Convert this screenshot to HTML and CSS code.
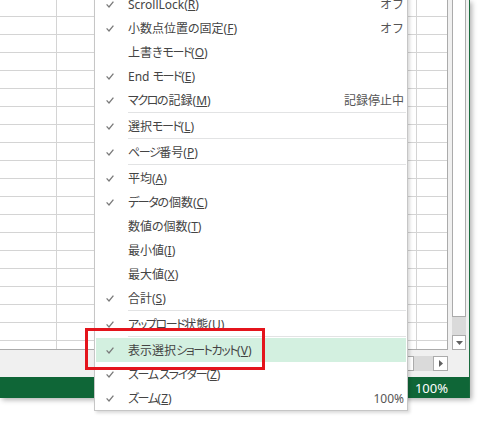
FILE: index.html
```html
<!DOCTYPE html>
<html lang="ja">
<head>
<meta charset="utf-8">
<link rel="stylesheet" href="styles.css">
</head>
<body>
<div class="window">
  <div class="sheet">
    <div class="grid"></div>
    <div class="vscroll">
      <div class="vthumb"></div>
      <div class="vtrack"></div>
      <div class="vbtn"><svg width="7" height="4" viewBox="0 0 7 4"><path d="M0 0H7L3.5 4Z" fill="#606060"/></svg></div>
    </div>
  </div>
  <div class="hbar">
    <div class="hscroll">
      <div class="hthumb"></div>
      <div class="htrack"></div>
      <div class="hbtn"><svg width="4" height="7" viewBox="0 0 4 7"><path d="M0 0V7L4 3.5Z" fill="#606060"/></svg></div>
    </div>
  </div>
  <div class="status"><span>100%</span></div>
</div>

<div class="menu">
  <div class="item"><span class="chk"><svg width="8" height="7" viewBox="0 0 8 7"><path d="M0.6 3.4L3 5.9L7.4 0.6" fill="none" stroke="#7a7a7a" stroke-width="1.3"/></svg></span><span class="label">ScrollLock(<u>R</u>)</span><span class="val">オフ</span></div>
  <div class="item"><span class="chk"><svg width="8" height="7" viewBox="0 0 8 7"><path d="M0.6 3.4L3 5.9L7.4 0.6" fill="none" stroke="#7a7a7a" stroke-width="1.3"/></svg></span><span class="label">小数点位置の固定(<u>F</u>)</span><span class="val">オフ</span></div>
  <div class="item"><span class="chk"></span><span class="label">上書き<span class="kana">モード</span>(<u>O</u>)</span></div>
  <div class="item"><span class="chk"><svg width="8" height="7" viewBox="0 0 8 7"><path d="M0.6 3.4L3 5.9L7.4 0.6" fill="none" stroke="#7a7a7a" stroke-width="1.3"/></svg></span><span class="label">End <span class="kana">モード</span>(<u>E</u>)</span></div>
  <div class="item"><span class="chk"><svg width="8" height="7" viewBox="0 0 8 7"><path d="M0.6 3.4L3 5.9L7.4 0.6" fill="none" stroke="#7a7a7a" stroke-width="1.3"/></svg></span><span class="label"><span class="kana">マクロ</span>の記録(<u>M</u>)</span><span class="val">記録停止中</span></div>
  <div class="sep"></div>
  <div class="item"><span class="chk"><svg width="8" height="7" viewBox="0 0 8 7"><path d="M0.6 3.4L3 5.9L7.4 0.6" fill="none" stroke="#7a7a7a" stroke-width="1.3"/></svg></span><span class="label">選択<span class="kana">モード</span>(<u>L</u>)</span></div>
  <div class="sep"></div>
  <div class="item"><span class="chk"><svg width="8" height="7" viewBox="0 0 8 7"><path d="M0.6 3.4L3 5.9L7.4 0.6" fill="none" stroke="#7a7a7a" stroke-width="1.3"/></svg></span><span class="label"><span class="kana">ページ</span>番号(<u>P</u>)</span></div>
  <div class="sep"></div>
  <div class="item"><span class="chk"><svg width="8" height="7" viewBox="0 0 8 7"><path d="M0.6 3.4L3 5.9L7.4 0.6" fill="none" stroke="#7a7a7a" stroke-width="1.3"/></svg></span><span class="label">平均(<u>A</u>)</span></div>
  <div class="item"><span class="chk"><svg width="8" height="7" viewBox="0 0 8 7"><path d="M0.6 3.4L3 5.9L7.4 0.6" fill="none" stroke="#7a7a7a" stroke-width="1.3"/></svg></span><span class="label"><span class="kana">データ</span>の個数(<u>C</u>)</span></div>
  <div class="item"><span class="chk"></span><span class="label">数値の個数(<u>T</u>)</span></div>
  <div class="item"><span class="chk"></span><span class="label">最小値(<u>I</u>)</span></div>
  <div class="item"><span class="chk"></span><span class="label">最大値(<u>X</u>)</span></div>
  <div class="item"><span class="chk"><svg width="8" height="7" viewBox="0 0 8 7"><path d="M0.6 3.4L3 5.9L7.4 0.6" fill="none" stroke="#7a7a7a" stroke-width="1.3"/></svg></span><span class="label">合計(<u>S</u>)</span></div>
  <div class="sep"></div>
  <div class="item"><span class="chk"><svg width="8" height="7" viewBox="0 0 8 7"><path d="M0.6 3.4L3 5.9L7.4 0.6" fill="none" stroke="#7a7a7a" stroke-width="1.3"/></svg></span><span class="label"><span class="kana">アップロード</span>状態(<u>U</u>)</span></div>
  <div class="sep"></div>
  <div class="item hl"><span class="chk"><svg width="8" height="7" viewBox="0 0 8 7"><path d="M0.6 3.4L3 5.9L7.4 0.6" fill="none" stroke="#7a7a7a" stroke-width="1.3"/></svg></span><span class="label">表示選択<span class="kana">ショートカット</span>(<u>V</u>)</span></div>
  <div class="item"><span class="chk"><svg width="8" height="7" viewBox="0 0 8 7"><path d="M0.6 3.4L3 5.9L7.4 0.6" fill="none" stroke="#7a7a7a" stroke-width="1.3"/></svg></span><span class="label"><span class="kana">ズーム スライダー</span>(<u>Z</u>)</span></div>
  <div class="item"><span class="chk"><svg width="8" height="7" viewBox="0 0 8 7"><path d="M0.6 3.4L3 5.9L7.4 0.6" fill="none" stroke="#7a7a7a" stroke-width="1.3"/></svg></span><span class="label"><span class="kana">ズーム</span>(<u>Z</u>)</span><span class="val">100%</span></div>
</div>

<div class="callout"></div>
</body>
</html>
```

FILE: styles.css
```css
html, body {
  margin: 0;
  padding: 0;
}
body {
  width: 485px;
  height: 430px;
  overflow: hidden;
  position: relative;
  background: #ffffff;
  font-family: "Noto Sans", "Noto Sans CJK JP", sans-serif;
}

.window {
  width: 469px;
  border-right: 1px solid #1a6b3e;
  display: flex;
  flex-direction: column;
  box-shadow: 2px 2px 5px rgba(0, 0, 0, 0.3);
  background: #f0f0f0;
}

.sheet {
  display: flex;
  height: 350px;
}

.grid {
  width: 448px;
  height: 350px;
  box-sizing: border-box;
  border-right: 1px solid #ababab;
  border-bottom: 1px solid #ababab;
  background-color: #ffffff;
  background-image:
    linear-gradient(to bottom, #d4d4d4 1px, transparent 1px),
    linear-gradient(to right, #d4d4d4 1px, transparent 1px);
  background-size: 100% 18px, 72px 100%;
  background-position: 0 16px, 56px 0;
}

.vscroll {
  width: 21px;
  height: 350px;
  box-sizing: border-box;
  padding: 0 3px 0 4px;
  display: flex;
  flex-direction: column;
  background: #f0f0f0;
}
.vthumb {
  flex: 1;
  background: #ffffff;
  border: 1px solid #ababab;
  border-top: none;
}
.vtrack {
  height: 18px;
  background: #dadada;
}
.vbtn {
  height: 15px;
  box-sizing: border-box;
  border: 1px solid #ababab;
  background: #ffffff;
  display: flex;
  align-items: center;
  justify-content: center;
}

.hbar {
  height: 27px;
  box-sizing: border-box;
  padding: 6px 21px 0 0;
  display: flex;
  justify-content: flex-end;
  background: #f0f0f0;
}
.hscroll {
  display: flex;
  height: 15px;
}
.hthumb {
  width: 120px;
  box-sizing: border-box;
  background: #ffffff;
  border: 1px solid #ababab;
}
.htrack {
  width: 19px;
  background: #dadada;
}
.hbtn {
  width: 15px;
  box-sizing: border-box;
  border: 1px solid #ababab;
  background: #ffffff;
  display: flex;
  align-items: center;
  justify-content: center;
}

.status {
  height: 21px;
  box-sizing: border-box;
  padding-right: 21px;
  display: flex;
  align-items: center;
  justify-content: flex-end;
  background: #0f6637;
  color: #ffffff;
  font-size: 13px;
}

.menu {
  position: absolute;
  left: 94px;
  top: -10px;
  width: 314px;
  box-sizing: border-box;
  border: 1px solid #c6c6c6;
  padding: 1px 1px 0 1px;
  background: #ffffff;
  box-shadow: 2px 2px 3px rgba(0, 0, 0, 0.15);
  font-size: 12px;
  color: #444444;
}
.item {
  height: 24px;
  display: flex;
  align-items: center;
}
.item.hl {
  background: #d3f0e0;
}
.chk {
  width: 32px;
  flex: none;
  box-sizing: border-box;
  padding-left: 10px;
  display: flex;
  align-items: center;
}
.label {
  flex: 1;
  white-space: nowrap;
  font-feature-settings: "palt";
}
.kana {
  letter-spacing: -1.4px;
}
.label u {
  text-underline-offset: 1px;
}
.val {
  padding-right: 2px;
  color: #555555;
  white-space: nowrap;
}
.sep {
  margin-left: 32px;
  border-top: 1px solid #e2e3e4;
  margin-bottom: 1px;
}

.callout {
  position: absolute;
  left: 85px;
  top: 328px;
  width: 180px;
  height: 42px;
  box-sizing: border-box;
  border: 3px solid #e4141c;
}
```
